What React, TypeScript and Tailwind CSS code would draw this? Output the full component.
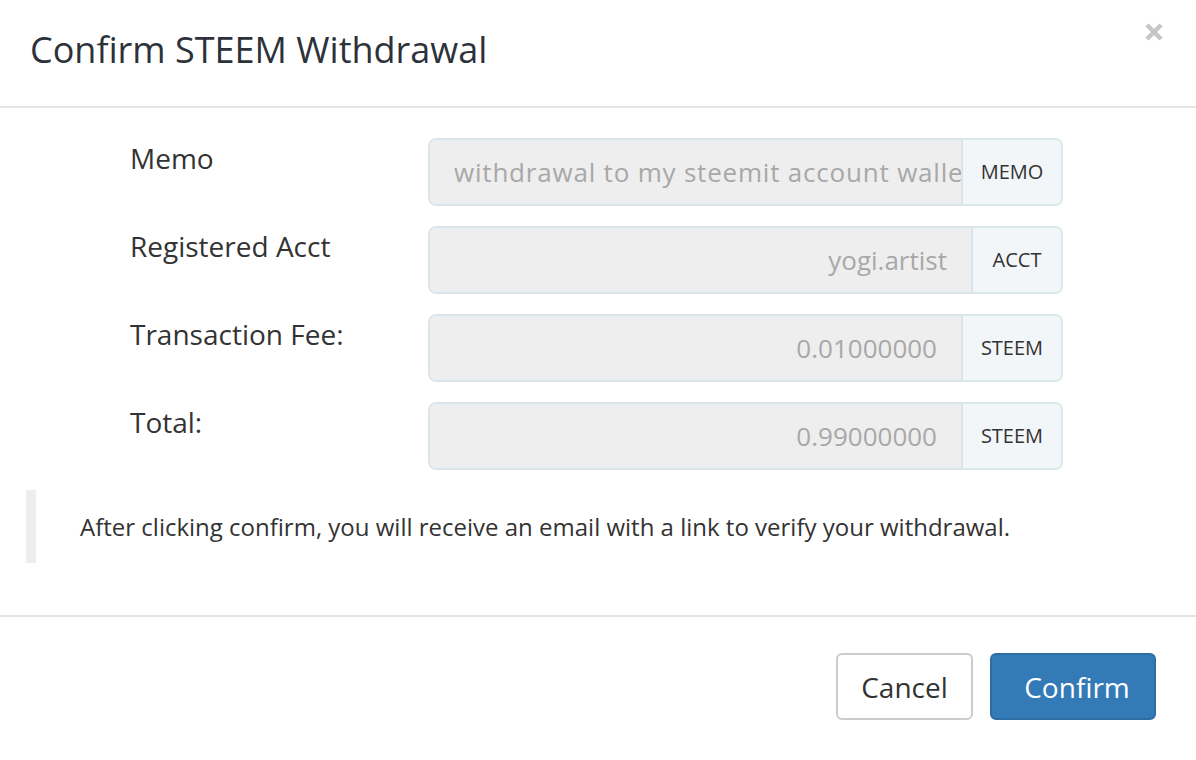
import React from "react";

interface Field {
    label: string;
    value: string;
    addon: string;
    align: "left" | "right";
    addonWidth: string;
}

const fields: Field[] = [
    { label: "Memo", value: "withdrawal to my steemit account wallet", addon: "MEMO", align: "left", addonWidth: "w-[100px]" },
    { label: "Registered Acct", value: "yogi.artist", addon: "ACCT", align: "right", addonWidth: "w-[90px]" },
    { label: "Transaction Fee:", value: "0.01000000", addon: "STEEM", align: "right", addonWidth: "w-[100px]" },
    { label: "Total:", value: "0.99000000", addon: "STEEM", align: "right", addonWidth: "w-[100px]" },
];

export default function App() {
    return (
        <div className="w-[1196px] h-[760px] bg-white text-[#333] overflow-hidden" style={{ fontFamily: '"Open Sans", "Liberation Sans", sans-serif' }}>
            {/* Header */}
            <div className="relative h-[108px] flex items-center px-[30px] border-b-2 border-[#e5e5e5]">
                <h4 className="text-[36px] leading-[40px] text-[#2d323a] -mt-[6px]">Confirm STEEM Withdrawal</h4>
                <button className="absolute right-[32px] top-[22px] w-[20px] h-[20px]">
                    <svg viewBox="0 0 20 20" width="20" height="20">
                        <path d="M3 3 L17 17 M17 3 L3 17" stroke="#c6c6c6" strokeWidth="4.5" strokeLinecap="butt" />
                    </svg>
                </button>
            </div>

            {/* Body */}
            <div className="pt-[30px] px-[26px]">
                <div className="flex flex-col gap-[20px]">
                    {fields.map((f) => (
                        <div key={f.label} className="flex items-start">
                            <label className="w-[402px] pl-[104px] pt-[3px] text-[28px] leading-[34px] text-[#333]">{f.label}</label>
                            <div className="w-[635px] h-[68px] flex rounded-[8px] border-2 border-[#dbe6ec] overflow-hidden">
                                <div className={`flex-1 min-w-0 bg-[#eeeeee] flex items-center px-[24px] overflow-hidden whitespace-nowrap text-[26px] text-[#a8a8a8] ${f.align === "right" ? "justify-end" : "justify-start tracking-[0.8px]"}`}>
                                    {f.value}
                                </div>
                                <div className={`${f.addonWidth} shrink-0 bg-[#f3f6f8] border-l-2 border-[#dbe6ec] flex items-center justify-center text-[20px] text-[#333]`}>
                                    {f.addon}
                                </div>
                            </div>
                        </div>
                    ))}
                </div>

                <blockquote className="mt-[20px] h-[73px] border-l-[10px] border-[#eeeeee] pl-[44px] flex items-center text-[24px] text-[#333]">
                    After clicking confirm, you will receive an email with a link to verify your withdrawal.
                </blockquote>
            </div>

            {/* Footer */}
            <div className="mt-[52px] border-t-2 border-[#e5e5e5] pt-[36px] pr-[40px] flex justify-end gap-[17px]">
                <button className="w-[137px] h-[67px] rounded-[6px] border-2 border-[#cccccc] bg-white text-[28px] text-[#333]">Cancel</button>
                <button className="w-[166px] h-[67px] rounded-[6px] border-2 border-[#2e6da4] bg-[#337ab7] pl-[8px] text-[28px] text-white">Confirm</button>
            </div>
        </div>
    );
}
